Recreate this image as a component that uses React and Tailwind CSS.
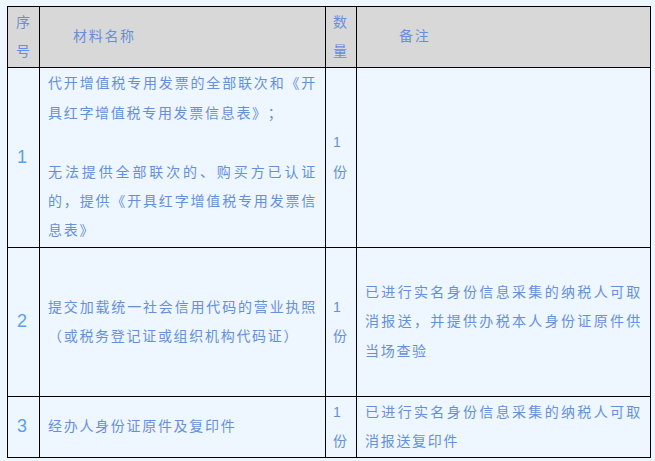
const font = { fontFamily: '"Liberation Sans", "Noto Sans CJK SC", sans-serif' };

function Line({ text, full }) {
  return (
    <div className={full ? 'whitespace-nowrap [text-align-last:justify]' : 'whitespace-nowrap'}>
      {text || '\u00a0'}
    </div>
  );
}

function Cell({ children, className = '' }) {
  return (
    <div className={`flex flex-col justify-center border-r border-b border-black ${className}`}>
      {children}
    </div>
  );
}

const rows = [
  {
    no: '1',
    h: 'h-[180px]',
    material: [
      ['代开增值税专用发票的全部联次和《开', true],
      ['具红字增值税专用发票信息表》；'],
      [''],
      ['无法提供全部联次的、购买方已认证', true],
      ['的，提供《开具红字增值税专用发票信', true],
      ['息表》'],
    ],
    note: [],
  },
  {
    no: '2',
    h: 'h-[149px]',
    material: [
      ['提交加载统一社会信用代码的营业执照', true],
      ['（或税务登记证或组织机构代码证）'],
    ],
    note: [
      ['已进行实名身份信息采集的纳税人可取', true],
      ['消报送，并提供办税本人身份证原件供', true],
      ['当场查验'],
    ],
  },
  {
    no: '3',
    h: 'h-[61px]',
    material: [['经办人身份证原件及复印件']],
    note: [
      ['已进行实名身份信息采集的纳税人可取', true],
      ['消报送复印件'],
    ],
  },
];

export default function App() {
  return (
    <div className="w-[655px] h-[461px] bg-[#eef6ff] pt-[6px] pl-[7px] [text-spacing-trim:space-all]" style={font}>
      <div className="grid w-[644px] grid-cols-[32px_286px_31px_294px] border-l border-t border-black text-[14px] leading-[29.4px] tracking-[1.7px] text-[#6690dc]">
        {/* header */}
        <Cell className="h-[61px] bg-[#d8d8d8] pl-[8px]">
          <div>序</div>
          <div>号</div>
        </Cell>
        <Cell className="h-[61px] bg-[#d8d8d8] pl-[33px]">
          <div>材料名称</div>
        </Cell>
        <Cell className="h-[61px] bg-[#d8d8d8] pl-[7px]">
          <div>数</div>
          <div>量</div>
        </Cell>
        <Cell className="h-[61px] bg-[#d8d8d8] pl-[42px]">
          <div>备注</div>
        </Cell>

        {rows.map((r) => (
          <div key={r.no} className="contents">
            <Cell className={`${r.h} pl-[9px] text-[18px] text-[#59a2ea] tracking-normal`}>
              <div>{r.no}</div>
            </Cell>
            <Cell className={`${r.h} px-[8px]`}>
              {r.material.map(([t, f], i) => (
                <Line key={i} text={t} full={f} />
              ))}
            </Cell>
            <Cell className={`${r.h} pl-[7px]`}>
              <div>1</div>
              <div>份</div>
            </Cell>
            <Cell className={`${r.h} pl-[8px] pr-[8px]`}>
              {r.note.map(([t, f], i) => (
                <Line key={i} text={t} full={f} />
              ))}
            </Cell>
          </div>
        ))}
      </div>
    </div>
  );
}
